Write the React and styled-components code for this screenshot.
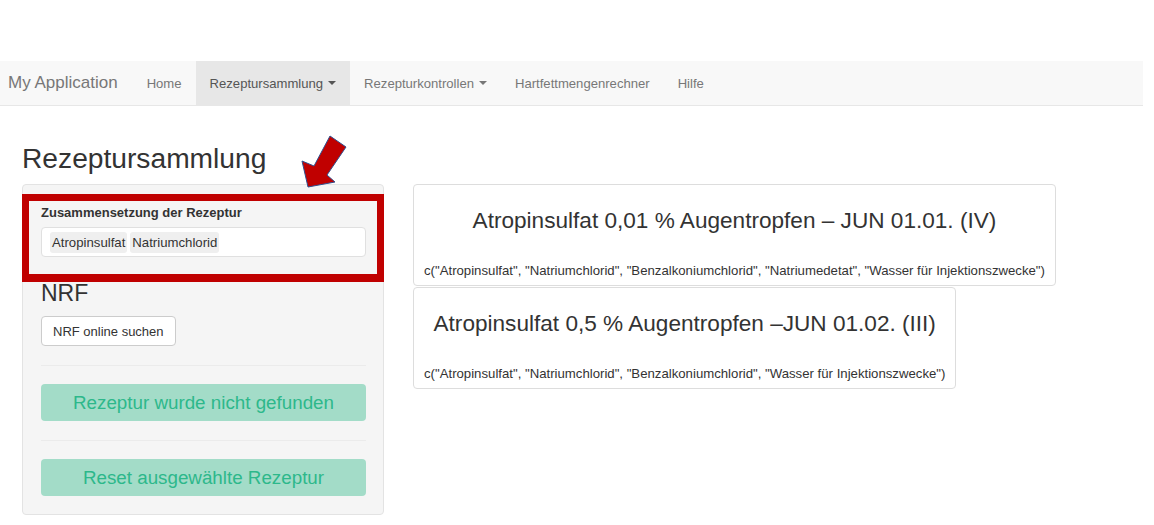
import React from 'react'
import styled, { createGlobalStyle } from 'styled-components'

const GlobalStyle = createGlobalStyle`
  body {
    margin: 0;
    background: #fff;
    color: #333;
    font-family: "Liberation Sans", Arial, Helvetica, sans-serif;
  }
  * {
    box-sizing: border-box;
  }
`

const Page = styled.div`
  position: relative;
  width: 1154px;
  height: 525px;
  padding-top: 61px;
  overflow: hidden;
`

const Navbar = styled.nav`
  display: flex;
  align-items: stretch;
  width: 1143px;
  height: 45px;
  background: #f8f8f8;
  border-bottom: 1px solid #e7e7e7;
`

const Brand = styled.a`
  display: flex;
  align-items: center;
  padding: 0 15px 0 8px;
  font-size: 17px;
  color: #777;
`

const NavLink = styled.a`
  display: flex;
  align-items: center;
  padding: 0 14px;
  font-size: 13.1px;
  color: ${(props) => (props.active ? '#555' : '#777')};
  background: ${(props) => (props.active ? '#e7e7e7' : 'transparent')};
`

const Caret = styled.span`
  display: inline-block;
  margin-left: 5px;
  border-top: 4px solid currentColor;
  border-left: 4px solid transparent;
  border-right: 4px solid transparent;
`

const Container = styled.div`
  padding: 0 22px;
`

const Title = styled.h2`
  margin: 37px 0 10px;
  font-size: 28.2px;
  font-weight: 400;
  line-height: 1.1;
`

const Row = styled.div`
  display: flex;
  align-items: flex-start;
  gap: 29px;
`

const Well = styled.div`
  position: relative;
  width: 362px;
  padding: 19px 17px 18px 18px;
  background: #f5f5f5;
  border: 1px solid #e3e3e3;
  border-radius: 4px;
`

const Highlight = styled.div`
  position: absolute;
  top: 9px;
  left: -1px;
  width: 362px;
  height: 88px;
  border: 7px solid #c00000;
  border-bottom-width: 8px;
  pointer-events: none;
`

const Label = styled.div`
  font-size: 13px;
  font-weight: 700;
  line-height: 18px;
  margin-bottom: 5px;
`

const TagInput = styled.div`
  display: flex;
  align-items: center;
  gap: 3px;
  height: 30px;
  padding: 0 8px;
  background: #fff;
  border: 1px solid #e0e0e0;
  border-radius: 4px;
`

const Tag = styled.span`
  display: flex;
  align-items: center;
  height: 21px;
  padding: 0 2px;
  background: #efefef;
  border-radius: 3px;
  font-size: 13.2px;
`

const SectionHeading = styled.h3`
  margin: 24px 0 10px;
  font-size: 23px;
  font-weight: 400;
  line-height: 1.1;
`

const DefaultButton = styled.button`
  height: 30px;
  padding: 0 11px;
  background: #fff;
  border: 1px solid #ccc;
  border-radius: 4px;
  font-family: inherit;
  font-size: 13px;
  color: #333;
`

const Divider = styled.hr`
  margin: 19px 0 18px;
  border: 0;
  border-top: 1px solid #ebebeb;
`

const SuccessButton = styled.button`
  display: block;
  width: 100%;
  height: 37px;
  background: #a3dcc8;
  border: 0;
  border-radius: 4px;
  font-family: inherit;
  font-size: 18.8px;
  color: #2db88b;
`

const Cards = styled.div`
  display: flex;
  flex-direction: column;
  align-items: flex-start;
  gap: 1px;
`

const Card = styled.div`
  display: flex;
  flex-direction: column;
  align-items: stretch;
  padding: 23px 10px 5px;
  background: #fff;
  border: 1px solid #ddd;
  border-radius: 4px;
`

const CardTitle = styled.div`
  font-size: 22.6px;
  line-height: 26px;
  text-align: center;
  margin-bottom: 28px;
`

const CardText = styled.div`
  font-size: 13.2px;
  line-height: 18px;
  white-space: nowrap;
`

const Arrow = styled.svg`
  position: absolute;
  left: 296px;
  top: 130px;
`

const recipes = [
  {
    title: 'Atropinsulfat 0,01 % Augentropfen – JUN 01.01. (IV)',
    parts: 'c("Atropinsulfat", "Natriumchlorid", "Benzalkoniumchlorid", "Natriumedetat", "Wasser für Injektionszwecke")',
  },
  {
    title: 'Atropinsulfat 0,5 % Augentropfen –JUN 01.02. (III)',
    parts: 'c("Atropinsulfat", "Natriumchlorid", "Benzalkoniumchlorid", "Wasser für Injektionszwecke")',
  },
]

export default function App() {
  return (
    <Page>
      <GlobalStyle />
      <Navbar>
        <Brand>My Application</Brand>
        <NavLink>Home</NavLink>
        <NavLink active>
          Rezeptursammlung <Caret />
        </NavLink>
        <NavLink>
          Rezepturkontrollen <Caret />
        </NavLink>
        <NavLink>Hartfettmengenrechner</NavLink>
        <NavLink>Hilfe</NavLink>
      </Navbar>
      <Container>
        <Title>Rezeptursammlung</Title>
        <Row>
          <Well>
            <Label>Zusammensetzung der Rezeptur</Label>
            <TagInput>
              <Tag>Atropinsulfat</Tag>
              <Tag>Natriumchlorid</Tag>
            </TagInput>
            <SectionHeading>NRF</SectionHeading>
            <DefaultButton>NRF online suchen</DefaultButton>
            <Divider />
            <SuccessButton>Rezeptur wurde nicht gefunden</SuccessButton>
            <Divider />
            <SuccessButton>Reset ausgewählte Rezeptur</SuccessButton>
            <Highlight />
          </Well>
          <Cards>
            {recipes.map((r) => (
              <Card key={r.title}>
                <CardTitle>{r.title}</CardTitle>
                <CardText>{r.parts}</CardText>
              </Card>
            ))}
          </Cards>
        </Row>
      </Container>
      <Arrow width="56" height="64" viewBox="0 0 56 64">
        <polygon
          points="12,57 6,31 18,36 34,6 50,17 31,45 39,52"
          fill="#c00000"
          stroke="#2f4f8f"
          strokeWidth="1"
          strokeLinejoin="miter"
        />
      </Arrow>
    </Page>
  )
}
